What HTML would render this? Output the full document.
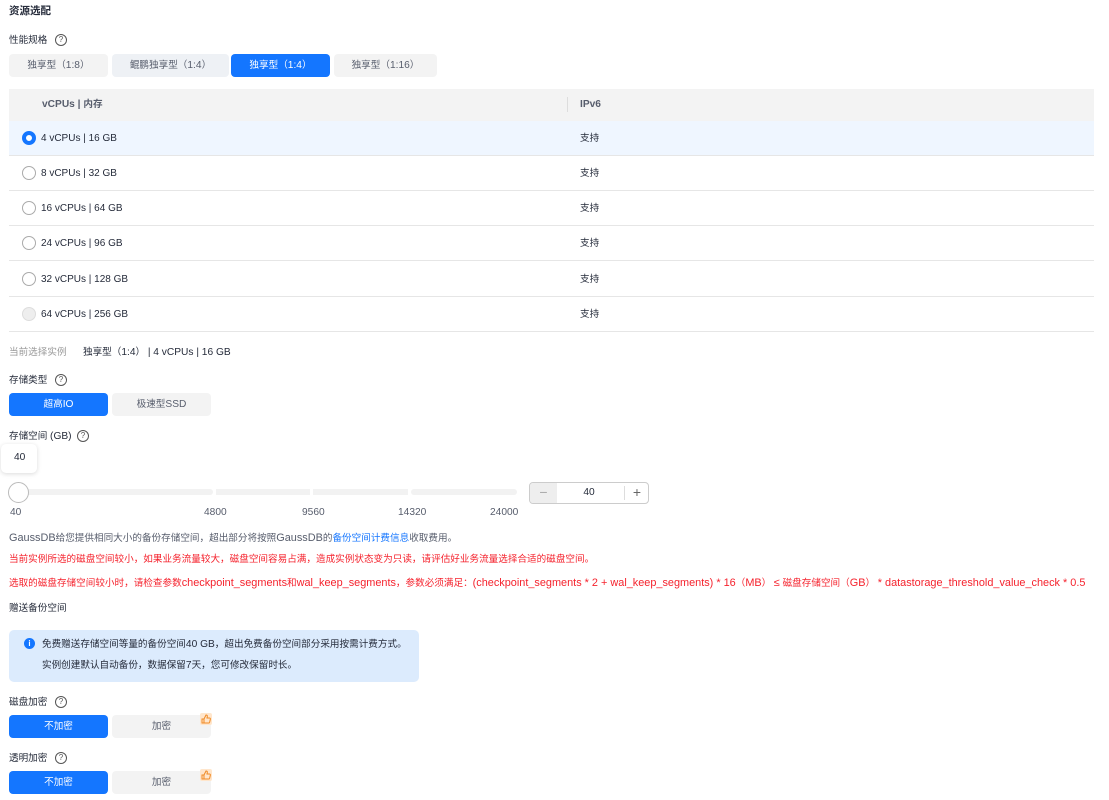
<!DOCTYPE html>
<html><head><meta charset="utf-8"><style>
*{margin:0;padding:0;box-sizing:border-box}
body{width:1109px;height:800px;background:#fff;font-family:"Liberation Sans","Noto Sans CJK SC",sans-serif;font-size:9.6px;color:#252b3a;position:relative;overflow:hidden}
.a{position:absolute;white-space:nowrap;line-height:12px}
.q{position:absolute;width:12px;height:12px;border:1px solid #555;border-radius:50%;font-size:8px;line-height:10px;text-align:center;color:#555}
.btn{position:absolute;height:23px;border-radius:4px;background:#f3f3f3;color:#575d6c;text-align:center;line-height:23px}
.on{background:#1476ff;color:#fff}
.row{position:absolute;left:9px;width:1085px;height:35px;border-bottom:1px solid #e6e6e6;font-size:10px}
.row .r{position:absolute;left:13px;top:10px;width:14px;height:14px;border:1px solid #aaa;border-radius:50%;background:#fff}
.row .t{position:absolute;left:32px;top:11px;line-height:14px}
.row .s{position:absolute;left:571px;top:11px;line-height:14px;font-size:9.6px}
.red{color:#f5222d}
.thumb{position:absolute;width:12px;height:12px;background:#ffe6cc;border-radius:2px}
.n{font-size:10.2px}
.m{font-size:10.9px}
</style></head><body>
<div class="a" style="left:9px;top:5px;font-size:10.5px;font-weight:bold">资源选配</div>
<div class="a" style="left:9px;top:35px">性能规格</div><div class="q" style="left:55px;top:34px">?</div>
<div class="btn" style="left:9px;top:54px;width:99px">独享型（<span class="n">1:8</span>）</div>
<div class="btn" style="left:112px;top:54px;width:117px;background:#eef1f5">鲲鹏独享型（<span class="n">1:4</span>）</div>
<div class="btn on" style="left:231px;top:54px;width:99px">独享型（<span class="n">1:4</span>）</div>
<div class="btn" style="left:334px;top:54px;width:103px">独享型（<span class="n">1:16</span>）</div>

<div style="position:absolute;left:9px;top:89px;width:1085px;height:32px;background:#f3f3f3"></div>
<div class="a n" style="left:42px;top:99px;color:#575d6c;font-weight:bold">vCPUs | <span style="font-size:9.6px">内存</span></div>
<div style="position:absolute;left:567px;top:97px;width:1px;height:15px;background:#ddd"></div>
<div class="a n" style="left:580px;top:99px;color:#575d6c;font-weight:bold">IPv6</div>

<div class="row" style="top:121px;background:#eff6ff"><div class="r" style="border:4px solid #1476ff;box-shadow:inset 0 0 0 2px #fff"></div><div class="t">4 vCPUs | 16 GB</div><div class="s">支持</div></div>
<div class="row" style="top:156px"><div class="r"></div><div class="t">8 vCPUs | 32 GB</div><div class="s">支持</div></div>
<div class="row" style="top:191px"><div class="r"></div><div class="t">16 vCPUs | 64 GB</div><div class="s">支持</div></div>
<div class="row" style="top:226px"><div class="r"></div><div class="t">24 vCPUs | 96 GB</div><div class="s">支持</div></div>
<div class="row" style="top:262px"><div class="r"></div><div class="t">32 vCPUs | 128 GB</div><div class="s">支持</div></div>
<div class="row" style="top:297px"><div class="r" style="background:#eee;border-color:#ddd"></div><div class="t">64 vCPUs | 256 GB</div><div class="s">支持</div></div>

<div class="a" style="left:9px;top:347px;color:#999">当前选择实例</div>
<div class="a" style="left:83px;top:347px">独享型（<span class="n">1:4</span>） <span class="n">| 4 vCPUs | 16 GB</span></div>

<div class="a" style="left:9px;top:375px">存储类型</div><div class="q" style="left:55px;top:374px">?</div>
<div class="btn on" style="left:9px;top:393px;width:99px">超高<span class="n">IO</span></div>
<div class="btn" style="left:112px;top:393px;width:99px">极速型<span class="n">SSD</span></div>

<div class="a" style="left:9px;top:431px">存储空间 <span class="n">(GB)</span></div><div class="q" style="left:77px;top:430px">?</div>
<div style="position:absolute;left:1px;top:444px;width:36px;height:29px;background:#fff;border-radius:5px;box-shadow:0 1px 5px rgba(0,0,0,.15)"></div>
<div class="a n" style="left:14px;top:452px">40</div>

<div style="position:absolute;left:10px;top:489px;width:203px;height:6px;background:#f2f2f2;border-radius:3px"></div>
<div style="position:absolute;left:216px;top:489px;width:94px;height:6px;background:#f2f2f2"></div>
<div style="position:absolute;left:313px;top:489px;width:95px;height:6px;background:#f2f2f2"></div>
<div style="position:absolute;left:411px;top:489px;width:106px;height:6px;background:#f2f2f2;border-radius:3px"></div>
<div style="position:absolute;left:8px;top:482px;width:21px;height:21px;border:1px solid #bbb;border-radius:50%;background:#fff"></div>
<div class="a n" style="left:10px;top:507px;color:#575d6c">40</div>
<div class="a n" style="left:204px;top:507px;color:#575d6c">4800</div>
<div class="a n" style="left:302px;top:507px;color:#575d6c">9560</div>
<div class="a n" style="left:398px;top:507px;color:#575d6c">14320</div>
<div class="a n" style="left:490px;top:507px;color:#575d6c">24000</div>

<div style="position:absolute;left:529px;top:482px;width:120px;height:22px;border:1px solid #ccc;border-radius:4px;overflow:hidden">
<div style="position:absolute;left:0;top:0;width:27px;height:20px;background:#eee;color:#aaa;text-align:center;line-height:19px;font-size:14px">−</div>
<div class="n" style="position:absolute;left:0;width:100%;top:4px;text-align:center">40</div>
<div style="position:absolute;left:94px;top:3px;width:1px;height:14px;background:#ddd"></div>
<div style="position:absolute;left:95px;top:0;width:24px;text-align:center;line-height:19px;font-size:14px;color:#666">+</div>
</div>

<div class="a" style="left:9px;top:532px;color:#575d6c"><span class="m">GaussDB</span>给您提供相同大小的备份存储空间，超出部分将按照<span class="m">GaussDB</span>的<span style="color:#1476ff">备份空间计费信息</span>收取费用。</div>
<div class="a red" style="left:9px;top:554px">当前实例所选的磁盘空间较小，如果业务流量较大，磁盘空间容易占满，造成实例状态变为只读，请评估好业务流量选择合适的磁盘空间。</div>
<div class="a red" style="left:9px;top:577px">选取的磁盘存储空间较小时，请检查参数<span class="m">checkpoint_segments</span>和<span class="m">wal_keep_segments</span>，参数必须满足：<span class="m">(checkpoint_segments * 2 + wal_keep_segments) * 16</span>（<span class="m">MB</span>） <span class="m">≤</span> 磁盘存储空间（<span class="m">GB</span>） <span class="m">* datastorage_threshold_value_check * 0.5</span></div>

<div class="a" style="left:9px;top:603px">赠送备份空间</div>
<div style="position:absolute;left:9px;top:630px;width:410px;height:52px;background:#dcebfd;border-radius:5px"></div>
<div style="position:absolute;left:24px;top:638px;width:11px;height:11px;border-radius:50%;background:#1476ff;color:#fff;font-size:8px;line-height:11px;text-align:center;font-weight:bold">i</div>
<div class="a" style="left:42px;top:639px">免费赠送存储空间等量的备份空间<span class="n">40 GB</span>，超出免费备份空间部分采用按需计费方式。</div>
<div class="a" style="left:42px;top:660px">实例创建默认自动备份，数据保留<span class="n">7</span>天，您可修改保留时长。</div>

<div class="a" style="left:9px;top:697px">磁盘加密</div><div class="q" style="left:55px;top:696px">?</div>
<div class="btn on" style="left:9px;top:715px;width:99px">不加密</div>
<div class="btn" style="left:112px;top:715px;width:99px">加密</div>
<svg class="thumb" style="left:200px;top:713px" viewBox="0 0 12 12"><path d="M2 6h2v4H2zM4 6l2-4c1 0 1.5.5 1.3 1.5L7 5h2.5c.6 0 1 .5.9 1l-.8 3.5c-.1.3-.4.5-.7.5H4" fill="none" stroke="#f08a24" stroke-width="1"/></svg>

<div class="a" style="left:9px;top:753px">透明加密</div><div class="q" style="left:55px;top:752px">?</div>
<div class="btn on" style="left:9px;top:771px;width:99px">不加密</div>
<div class="btn" style="left:112px;top:771px;width:99px">加密</div>
<svg class="thumb" style="left:200px;top:769px" viewBox="0 0 12 12"><path d="M2 6h2v4H2zM4 6l2-4c1 0 1.5.5 1.3 1.5L7 5h2.5c.6 0 1 .5.9 1l-.8 3.5c-.1.3-.4.5-.7.5H4" fill="none" stroke="#f08a24" stroke-width="1"/></svg>
</body></html>
